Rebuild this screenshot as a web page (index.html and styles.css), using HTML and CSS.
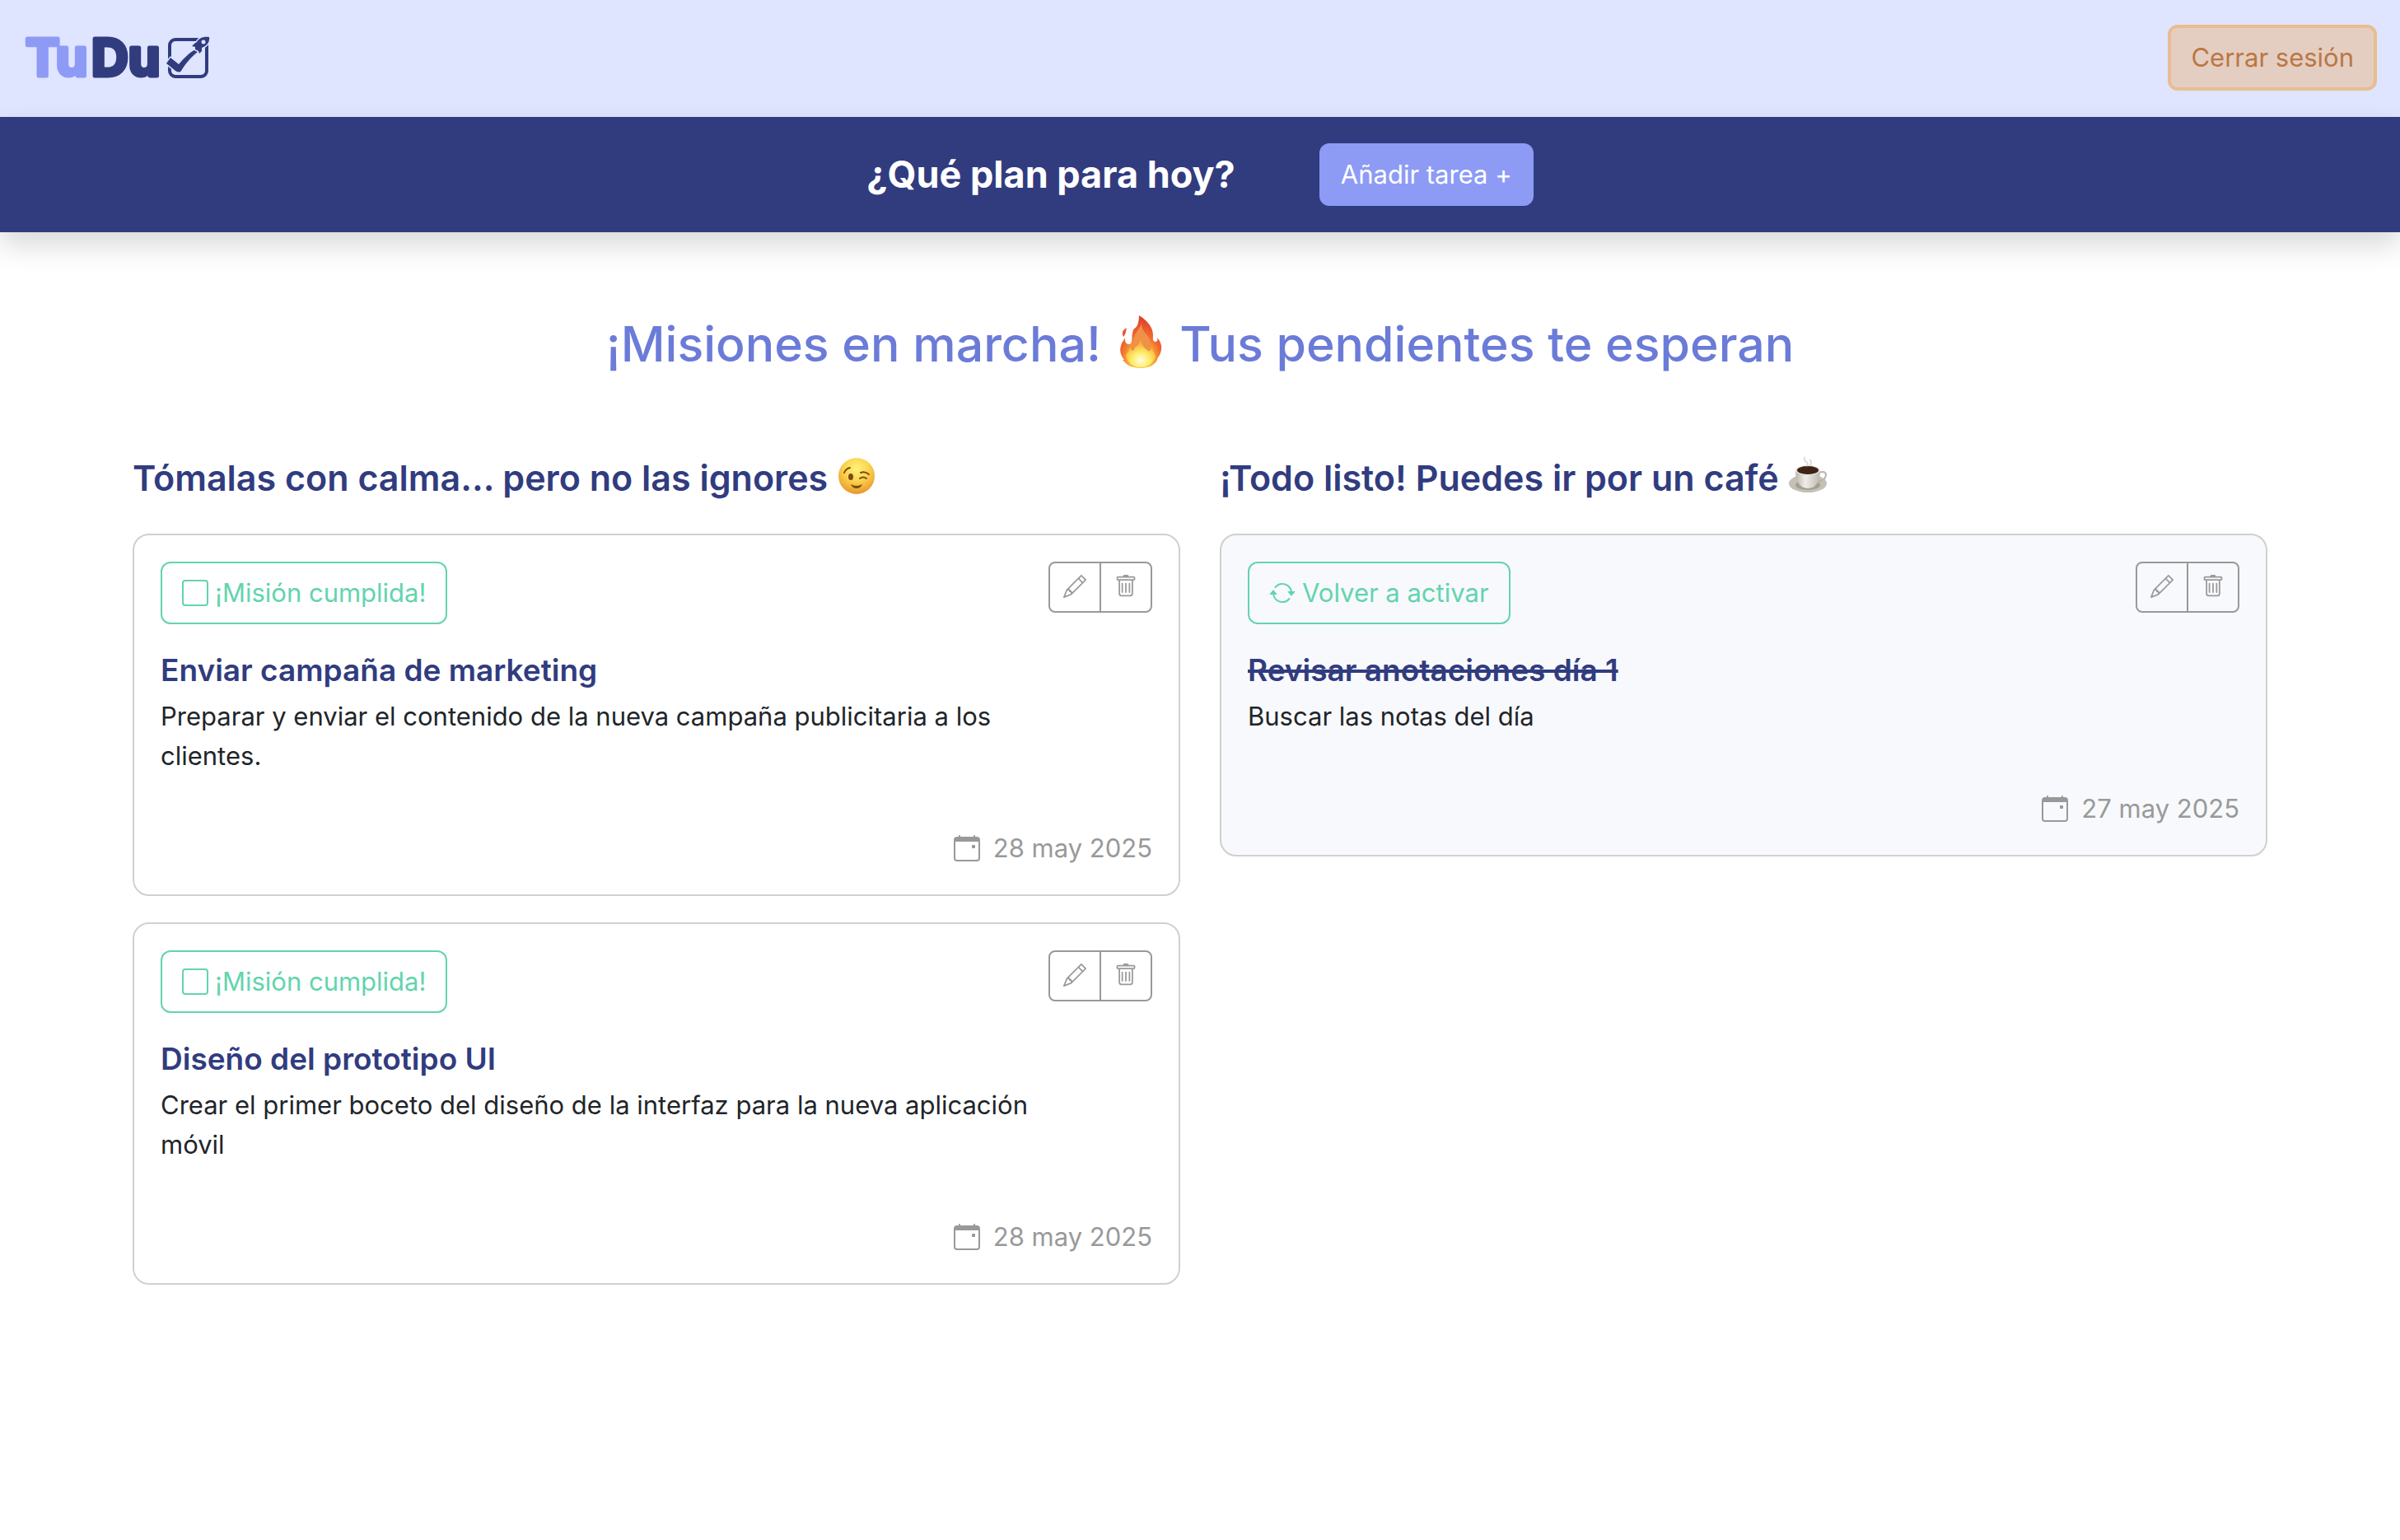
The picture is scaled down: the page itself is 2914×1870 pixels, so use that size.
FILE: index.html
```html
<!DOCTYPE html>
<html lang="es">
<head>
<meta charset="utf-8">
<title>TuDu</title>
<link rel="stylesheet" href="styles.css">
</head>
<body>
<svg class="sprite" aria-hidden="true">
  <symbol id="pencil" viewBox="0 0 16 16"><path d="M12.146.146a.5.5 0 0 1 .708 0l3 3a.5.5 0 0 1 0 .708l-10 10a.5.5 0 0 1-.168.11l-5 2a.5.5 0 0 1-.65-.65l2-5a.5.5 0 0 1 .11-.168zM11.207 2.5 13.5 4.793 14.793 3.5 12.5 1.207zm1.586 3L10.5 3.207 4 9.707V10h.5a.5.5 0 0 1 .5.5v.5h.5a.5.5 0 0 1 .5.5v.5h.293zm-9.761 5.175-.106.106-1.528 3.821 3.821-1.528.106-.106A.5.5 0 0 1 5 12.5V12h-.5a.5.5 0 0 1-.5-.5V11h-.5a.5.5 0 0 1-.468-.325"/></symbol>
  <symbol id="trash" viewBox="0 0 16 16"><path d="M5.5 5.5A.5.5 0 0 1 6 6v6a.5.5 0 0 1-1 0V6a.5.5 0 0 1 .5-.5m2.5 0a.5.5 0 0 1 .5.5v6a.5.5 0 0 1-1 0V6a.5.5 0 0 1 .5-.5m3 .5a.5.5 0 0 0-1 0v6a.5.5 0 0 0 1 0z"/><path d="M14.5 3a1 1 0 0 1-1 1H13v9a2 2 0 0 1-2 2H5a2 2 0 0 1-2-2V4h-.5a1 1 0 0 1-1-1V2a1 1 0 0 1 1-1H6a1 1 0 0 1 1-1h2a1 1 0 0 1 1 1h3.5a1 1 0 0 1 1 1zM4.118 4 4 4.059V13a1 1 0 0 0 1 1h6a1 1 0 0 0 1-1V4.059L11.882 4zM2.5 3h11V2h-11z"/></symbol>
  <symbol id="square" viewBox="0 0 16 16"><path d="M14 1a1 1 0 0 1 1 1v12a1 1 0 0 1-1 1H2a1 1 0 0 1-1-1V2a1 1 0 0 1 1-1zM2 0a2 2 0 0 0-2 2v12a2 2 0 0 0 2 2h12a2 2 0 0 0 2-2V2a2 2 0 0 0-2-2z"/></symbol>
  <symbol id="repeat" viewBox="0 0 16 16"><path d="M11.534 7h3.932a.25.25 0 0 1 .192.41l-1.966 2.36a.25.25 0 0 1-.384 0l-1.966-2.36a.25.25 0 0 1 .192-.41m-11 2h3.932a.25.25 0 0 0 .192-.41L2.692 6.23a.25.25 0 0 0-.384 0L.342 8.59A.25.25 0 0 0 .534 9"/><path d="M8 3c-1.552 0-2.94.707-3.857 1.818a.5.5 0 1 1-.771-.636A6.002 6.002 0 0 1 13.917 7H12.9A5 5 0 0 0 8 3M3.1 9a5.002 5.002 0 0 0 8.757 2.182.5.5 0 1 1 .771.636A6.002 6.002 0 0 1 2.083 9z"/></symbol>
  <symbol id="calendar" viewBox="0 0 16 16"><path d="M11 6.5a.5.5 0 0 1 .5-.5h1a.5.5 0 0 1 .5.5v1a.5.5 0 0 1-.5.5h-1a.5.5 0 0 1-.5-.5z"/><path d="M3.5 0a.5.5 0 0 1 .5.5V1h8V.5a.5.5 0 0 1 1 0V1h1a2 2 0 0 1 2 2v11a2 2 0 0 1-2 2H2a2 2 0 0 1-2-2V3a2 2 0 0 1 2-2h1V.5a.5.5 0 0 1 .5-.5M1 4v10a1 1 0 0 0 1 1h12a1 1 0 0 0 1-1V4z"/></symbol>
</svg>

<header class="topbar">
  <a class="brand" href="#" aria-label="TuDu">
    <svg class="logo" viewBox="0 0 226 52">
      <text class="logo-text logo-light" x="3" y="48">Tu</text>
      <text class="logo-text logo-dark" x="83" y="48">Du</text>
      <rect x="178" y="4" width="45" height="45" rx="7" fill="none" stroke="#313c7f" stroke-width="4"/>
      <path d="M174 33 179 26 189 34C195 27 202 20 209 16L212 19C203 26 197 34 192 42Q190 45 185 42Z" fill="#313c7f" stroke="#dfe4ff" stroke-width="3" paint-order="stroke" stroke-linejoin="round"/>
      <path d="M226 1C218 0 213 3 211 7L208 9 205 12 209 13 209 16 213 18 214 21 217 18 217 14C223 12 227 7 226 1Z" fill="#313c7f" stroke="#dfe4ff" stroke-width="3" paint-order="stroke"/>
      <circle cx="219" cy="7" r="2.5" fill="#dfe4ff"/>
    </svg>
  </a>
  <button class="btn btn-logout" type="button">Cerrar sesión</button>
</header>

<section class="planner">
  <h1 class="planner-title">¿Qué plan para hoy?</h1>
  <button class="btn btn-add" type="button">Añadir tarea +</button>
</section>

<main class="container">
  <h2 class="headline">¡Misiones en marcha!
    <svg class="emoji emoji-lg" viewBox="0 0 64 64" role="img" aria-label="Fuego">
      <defs>
        <radialGradient id="flame" cx=".5" cy=".85" r=".8">
          <stop offset="0" stop-color="#ffe94f"/><stop offset=".35" stop-color="#fbb034"/><stop offset=".62" stop-color="#f0692f"/><stop offset="1" stop-color="#e0402c"/>
        </radialGradient>
        <radialGradient id="flame-core" cx=".5" cy=".75" r=".6">
          <stop offset="0" stop-color="#fffde0"/><stop offset=".5" stop-color="#ffec6a"/><stop offset="1" stop-color="#f9b53c"/>
        </radialGradient>
      </defs>
      <path fill="url(#flame)" d="M30 0C38 5 47 13 47 24C47 27 46 30 49 32C52 32 53 30 52 27C56 31 58 37 57 42C56 46 55 49 53 51L51 56 50 57C46 62 39 64 32 64C25 64 17 62 13 57L10 54 12 54C8 49 6 43 8 37C9 32 12 30 13 27C13 31 13 35 18 35C24 34 19 24 24 16C27 15 30 10 30 0Z"/>
      <path fill="#ea5837" d="M15 15C9 18 9 22 11 26C14 23 14 19 15 15Z"/>
      <path fill="#ef9148" d="M33 10C30 18 24 22 23 30C23 35 22 39 16 42L46 43C42 36 45 31 40 24C36 20 33 16 33 10Z"/>
      <path fill="url(#flame-core)" d="M32 30C31 37 25 36 24 42C22 45 20 40 18 39C19 44 14 46 14 50C17 59 24 63 32 63C40 63 47 59 50 50C49 45 46 44 46 39C44 42 42 46 40 42C36 39 33 36 32 30Z"/>
    </svg>
    Tus pendientes te esperan</h2>

  <div class="board">
    <section class="column">
      <h3 class="column-title">Tómalas con calma... pero no las ignores
        <svg class="emoji" viewBox="0 0 48 48" role="img" aria-label="Guiño">
          <defs>
            <radialGradient id="face" cx=".5" cy=".3" r=".7">
              <stop offset="0" stop-color="#fff37a"/><stop offset=".5" stop-color="#fbd34d"/><stop offset="1" stop-color="#e8962e"/>
            </radialGradient>
          </defs>
          <circle cx="24" cy="24" r="22" fill="url(#face)"/>
          <ellipse cx="17" cy="25" rx="3" ry="4" fill="#7a4a12"/>
          <path d="M9 20Q11 15 16 14M29 20Q34 18 39 22M28 27Q32 24 36 27" fill="none" stroke="#7a4a12" stroke-width="2" stroke-linecap="round"/>
          <path d="M17 34Q24 38 31 34Q29 39 24 39Q19 39 17 34Z" fill="#7a4a12"/>
        </svg></h3>
      <article class="card">
        <div class="card-top">
          <button class="btn btn-status" type="button"><svg class="icon"><use href="#square"/></svg>¡Misión cumplida!</button>
          <div class="btn-group">
            <button class="btn-icon" type="button" aria-label="Editar"><svg class="icon-sm"><use href="#pencil"/></svg></button>
            <button class="btn-icon" type="button" aria-label="Eliminar"><svg class="icon-sm"><use href="#trash"/></svg></button>
          </div>
        </div>
        <h4 class="card-title">Enviar campaña de marketing</h4>
        <p class="card-text">Preparar y enviar el contenido de la nueva campaña publicitaria a los clientes.</p>
        <p class="card-date"><svg class="icon"><use href="#calendar"/></svg>28 may 2025</p>
      </article>
      <article class="card">
        <div class="card-top">
          <button class="btn btn-status" type="button"><svg class="icon"><use href="#square"/></svg>¡Misión cumplida!</button>
          <div class="btn-group">
            <button class="btn-icon" type="button" aria-label="Editar"><svg class="icon-sm"><use href="#pencil"/></svg></button>
            <button class="btn-icon" type="button" aria-label="Eliminar"><svg class="icon-sm"><use href="#trash"/></svg></button>
          </div>
        </div>
        <h4 class="card-title">Diseño del prototipo UI</h4>
        <p class="card-text">Crear el primer boceto del diseño de la interfaz para la nueva aplicación móvil</p>
        <p class="card-date"><svg class="icon"><use href="#calendar"/></svg>28 may 2025</p>
      </article>
    </section>

    <section class="column">
      <h3 class="column-title">¡Todo listo! Puedes ir por un café
        <svg class="emoji" viewBox="0 0 48 48" role="img" aria-label="Café">
          <defs>
            <linearGradient id="cup"><stop offset="0" stop-color="#b9b5aa"/><stop offset=".4" stop-color="#efede7"/><stop offset="1" stop-color="#bdb9ae"/></linearGradient>
          </defs>
          <ellipse cx="24" cy="33" rx="23" ry="11" fill="#c4c0b6"/>
          <ellipse cx="24" cy="35" rx="15" ry="6" fill="#a39f95"/>
          <path d="M37 20Q46 17 46 23Q45 30 35 31" fill="none" stroke="#b9b5aa" stroke-width="2"/>
          <path d="M9 17C9 30 14 39 24 39C34 39 39 30 39 17Z" fill="url(#cup)"/>
          <ellipse cx="24" cy="17" rx="15" ry="6" fill="#e6e3dc"/>
          <ellipse cx="24" cy="17" rx="13" ry="5" fill="#3e2416"/>
          <path d="M22 12Q26 9 21 6Q18 3 21 1M26 12Q30 7 26 4" fill="none" stroke="#dcdcdc" stroke-width="2"/>
        </svg></h3>
      <article class="card card-done">
        <div class="card-top">
          <button class="btn btn-status" type="button"><svg class="icon"><use href="#repeat"/></svg>Volver a activar</button>
          <div class="btn-group">
            <button class="btn-icon" type="button" aria-label="Editar"><svg class="icon-sm"><use href="#pencil"/></svg></button>
            <button class="btn-icon" type="button" aria-label="Eliminar"><svg class="icon-sm"><use href="#trash"/></svg></button>
          </div>
        </div>
        <h4 class="card-title">Revisar anotaciones día 1</h4>
        <p class="card-text">Buscar las notas del día</p>
        <p class="card-date"><svg class="icon"><use href="#calendar"/></svg>27 may 2025</p>
      </article>
    </section>
  </div>
</main>
</body>
</html>
```
FILE: styles.css
```css
* { box-sizing: border-box; }

body {
  margin: 0;
  background: #fff;
  color: #212529;
  font: 400 31px/48px Inter, "Liberation Sans", sans-serif;
}

h1, h2, h3, h4, p { margin: 0; }

.sprite { display: none; }

.topbar {
  display: flex;
  justify-content: space-between;
  align-items: center;
  padding: 30px 28px 32px;
  background: #dfe4ff;
}

.brand { display: flex; }
.logo { width: 226px; height: 52px; overflow: visible; }
.logo-text {
  font: 700 62px Inter, sans-serif;
  stroke-width: 5px;
  stroke-linejoin: round;
}
.logo-light { fill: #8d9bf5; stroke: #8d9bf5; }
.logo-dark { fill: #313c7f; stroke: #313c7f; }

.btn {
  display: inline-flex;
  align-items: center;
  gap: 8px;
  border: 2px solid transparent;
  border-radius: 12px;
  padding: 12px 24px;
  background: none;
  font: inherit;
}

.btn-logout {
  border: 4px solid #e9bd91;
  background: #e4cec1;
  color: #ba7745;
}

.planner {
  position: relative;
  display: flex;
  justify-content: center;
  align-items: center;
  gap: 102px;
  padding: 32px;
  background: #313c7f;
  box-shadow: 0 16px 32px rgba(0, 0, 0, .15);
}
.planner-title {
  color: #fff;
  font-size: 45px;
  font-weight: 700;
  line-height: 56px;
}
.btn-add { background: #8d9bf5; color: #fff; }

.container {
  max-width: 2640px;
  margin: 0 auto;
  padding: 98px 24px;
}

.headline {
  color: #6b7bd8;
  font-size: 59px;
  font-weight: 500;
  line-height: 76px;
  text-align: center;
}

.emoji { width: 48px; height: 48px; vertical-align: -6px; }
.emoji-lg { width: 64px; height: 64px; vertical-align: -8px; }

.board {
  display: grid;
  grid-template-columns: 1fr 1fr;
  gap: 48px;
  margin-top: 94px;
}

.column { display: flex; flex-direction: column; gap: 32px; }

.column-title {
  margin-bottom: 6px;
  color: #313c7f;
  font-size: 43px;
  font-weight: 600;
  line-height: 60px;
}

.card {
  border: 2px solid #d0d0d0;
  border-radius: 20px;
  padding: 32px;
}
.card-done { background: #f8f9fc; }

.card-top {
  display: flex;
  justify-content: space-between;
  align-items: flex-start;
  margin-bottom: 32px;
}

.btn-status { border-color: #63d4ae; color: #63d4ae; }

.btn-group {
  display: flex;
  border: 2px solid #999;
  border-radius: 8px;
}
.btn-icon {
  display: flex;
  border: 0;
  padding: 14px 16px 16px;
  background: none;
  color: #999;
}
.btn-icon + .btn-icon { border-left: 2px solid #999; }

.icon { width: 32px; height: 32px; fill: currentColor; }
.icon-sm { width: 28px; height: 28px; fill: currentColor; }

.card-title {
  color: #313c7f;
  font-size: 37px;
  font-weight: 600;
  line-height: 48px;
}
.card-done .card-title { text-decoration: line-through 4px; }

.card-text { max-width: 1056px; padding-top: 8px; }

.card-date {
  display: flex;
  justify-content: flex-end;
  align-items: center;
  gap: 16px;
  margin-top: 64px;
  color: #999;
}
```
